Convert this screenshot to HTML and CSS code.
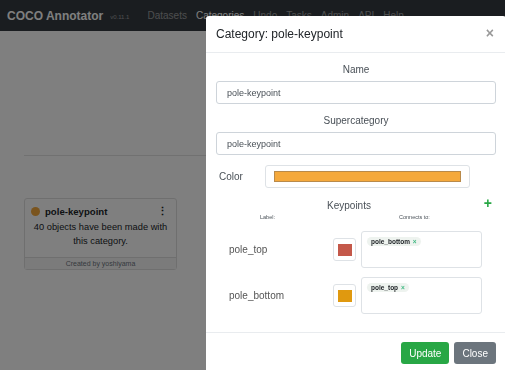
FILE: index.html
```
<!DOCTYPE html>
<html>
<head>
    <meta charset="UTF-8">
    <title>COCO Annotator - Categories</title>
    <link rel="stylesheet" href="styles.css">
</head>
<body>
    <nav class="navbar">
        <span class="brand">COCO Annotator</span>
        <span class="version">v0.11.1</span>
        <div class="nav-links">
            <span class="nav-link">Datasets</span>
            <span class="nav-link active">Categories</span>
            <span class="nav-link">Undo</span>
            <span class="nav-link">Tasks</span>
            <span class="nav-link">Admin</span>
            <span class="nav-link">API</span>
            <span class="nav-link">Help</span>
        </div>
    </nav>

    <div class="page">
        <hr class="divider">
        <div class="card">
            <div class="card-body">
                <div class="card-title">
                    <span class="dot"></span>
                    <span class="card-name">pole-keypoint</span>
                    <span class="kebab">&#8942;</span>
                </div>
                <p class="card-text">40 objects have been made with this category.</p>
            </div>
            <div class="card-footer">Created by yoshiyama</div>
        </div>
    </div>

    <div class="backdrop"></div>

    <div class="modal">
        <div class="modal-header">
            <div class="modal-title">Category: pole-keypoint</div>
            <span class="close-x">&times;</span>
        </div>
        <div class="modal-body">
            <div class="field-label">Name</div>
            <input type="text" class="form-input" value="pole-keypoint">
            <div class="field-label second">Supercategory</div>
            <input type="text" class="form-input" value="pole-keypoint">

            <div class="color-row">
                <span class="color-label">Color</span>
                <div class="color-box"><div class="color-bar"></div></div>
            </div>

            <div class="kp-header">
                <span class="kp-title">Keypoints</span>
                <span class="kp-add">+</span>
            </div>
            <div class="kp-cols">
                <span class="col-label">Label:</span>
                <span class="col-connects">Connects to:</span>
            </div>

            <div class="kp-row">
                <span class="kp-name">pole_top</span>
                <div class="swatch-box"><div class="swatch red"></div></div>
                <div class="tag-box">
                    <span class="tag">pole_bottom <span class="tag-x">&times;</span></span>
                </div>
            </div>
            <div class="kp-row">
                <span class="kp-name">pole_bottom</span>
                <div class="swatch-box"><div class="swatch amber"></div></div>
                <div class="tag-box">
                    <span class="tag">pole_top <span class="tag-x">&times;</span></span>
                </div>
            </div>
        </div>
        <div class="modal-footer">
            <button class="btn btn-success">Update</button>
            <button class="btn btn-secondary">Close</button>
        </div>
    </div>
</body>
</html>
```
FILE: styles.css
```
/* Reset */
* {
    margin: 0;
    padding: 0;
    box-sizing: border-box;
}

body {
    font-family: "Liberation Sans", Arial, sans-serif;
    background-color: #ffffff;
    color: #212529;
    width: 505px;
    height: 370px;
    overflow: hidden;
}

/* Navbar */
.navbar {
    height: 31px;
    background-color: #343a40;
    display: flex;
    align-items: center;
    padding-left: 7px;
}

.brand {
    color: #ffffff;
    font-weight: bold;
    font-size: 12px;
}

.version {
    color: rgba(255, 255, 255, 0.5);
    font-size: 6px;
    margin-left: 7px;
    margin-top: 3px;
}

.nav-links {
    display: flex;
    gap: 9px;
    margin-left: 18px;
}

.nav-link {
    color: rgba(255, 255, 255, 0.5);
    font-size: 10px;
}

.nav-link.active {
    color: #ffffff;
}

/* Page content behind the modal */
.page {
    padding: 0 24px;
}

.divider {
    border: none;
    border-top: 1px solid #e3e3e3;
    margin-top: 124px;
}

.card {
    width: 153px;
    margin-top: 42px;
    border: 1px solid #dfdfdf;
    border-radius: 3px;
    background-color: #ffffff;
}

.card-body {
    padding: 6px 5px 9px;
    text-align: center;
}

.card-title {
    display: flex;
    align-items: center;
    padding-left: 1px;
    padding-right: 3px;
}

.dot {
    width: 9px;
    height: 9px;
    border-radius: 50%;
    background-color: #f5a93c;
}

.card-name {
    font-weight: bold;
    font-size: 9.6px;
    margin-left: 5px;
    flex: 1;
    text-align: left;
}

.kebab {
    font-size: 11px;
    font-weight: bold;
}

.card-text {
    font-size: 9.3px;
    line-height: 14px;
    margin-top: 2px;
}

.card-footer {
    font-size: 7px;
    color: #6c757d;
    text-align: center;
    background-color: #f7f7f7;
    border-top: 1px solid #dfdfdf;
    padding: 2px 0;
}

/* Modal */
.backdrop {
    position: fixed;
    inset: 0;
    background-color: rgba(0, 0, 0, 0.5);
}

.modal {
    position: absolute;
    left: 206px;
    top: 16px;
    width: 300px;
    height: 370px;
    background-color: #ffffff;
    border-radius: 3px;
}

.modal-header {
    height: 37px;
    display: flex;
    align-items: center;
    justify-content: space-between;
    padding: 0 12px 0 10px;
    border-bottom: 1px solid #e9ecef;
}

.modal-title {
    font-size: 12px;
    color: #212529;
}

.close-x {
    font-size: 14px;
    font-weight: bold;
    color: #999999;
    margin-top: -3px;
}

.modal-body {
    padding: 9px 10px 0;
    height: 279px;
    color: #495057;
}

.field-label {
    text-align: center;
    font-size: 10px;
    line-height: 16px;
    margin-bottom: 3px;
}

.field-label.second {
    margin-top: 9px;
}

.form-input {
    display: block;
    width: 100%;
    height: 23px;
    border: 1px solid #ced4da;
    border-radius: 3px;
    padding: 0 10px;
    font-family: inherit;
    font-size: 9px;
    color: #495057;
}

.color-row {
    display: flex;
    align-items: center;
    margin-top: 10px;
    height: 22px;
}

.color-label {
    width: 49px;
    padding-left: 3px;
    font-size: 10px;
}

.color-box {
    width: 205px;
    height: 23px;
    border: 1px solid #dee2e6;
    border-radius: 3px;
    padding: 5px 8px;
}

.color-bar {
    height: 100%;
    background-color: #f5a93c;
    border: 1px solid #b98a4a;
}

.kp-header {
    display: flex;
    justify-content: center;
    align-items: center;
    margin-top: 11px;
    height: 14px;
    position: relative;
}

.kp-title {
    font-size: 10px;
    margin-right: 14px;
}

.kp-add {
    position: absolute;
    right: 4px;
    top: -3px;
    color: #28a745;
    font-weight: bold;
    font-size: 14px;
}

.kp-cols {
    display: flex;
    font-size: 5.5px;
    height: 9px;
    align-items: center;
}

.col-label {
    margin-left: 44px;
}

.col-connects {
    margin-left: 124px;
}

.kp-row {
    display: flex;
    align-items: center;
    height: 37px;
    margin-top: 10px;
}

.kp-row + .kp-row {
    margin-top: 9px;
}

.kp-name {
    width: 117px;
    padding-left: 13px;
    font-size: 10px;
    color: #555555;
}

.swatch-box {
    width: 23px;
    height: 23px;
    border: 1px solid #dee2e6;
    border-radius: 3px;
    display: flex;
    align-items: center;
    justify-content: center;
}

.swatch {
    width: 14px;
    height: 12px;
}

.swatch.red {
    background-color: #c4584a;
}

.swatch.amber {
    background-color: #e0990f;
}

.tag-box {
    width: 121px;
    height: 37px;
    margin-left: 5px;
    border: 1px solid #dee2e6;
    border-radius: 3px;
    padding: 5px 5px;
    display: flex;
    align-items: flex-start;
}

.tag {
    font-size: 6.5px;
    line-height: 9px;
    font-weight: bold;
    color: #212529;
    background-color: #eef3ef;
    border-radius: 5px;
    padding: 0 4px;
}

.tag-x {
    color: #41b883;
    margin-left: 1px;
}

.modal-footer {
    border-top: 1px solid #e9ecef;
    display: flex;
    justify-content: flex-end;
    gap: 5px;
    padding: 9px 10px;
}

.btn {
    border: none;
    border-radius: 3px;
    height: 22px;
    padding: 0 8px;
    font-family: inherit;
    font-size: 10px;
    color: #ffffff;
}

.btn-success {
    background-color: #28a745;
}

.btn-secondary {
    background-color: #6c757d;
}
```
